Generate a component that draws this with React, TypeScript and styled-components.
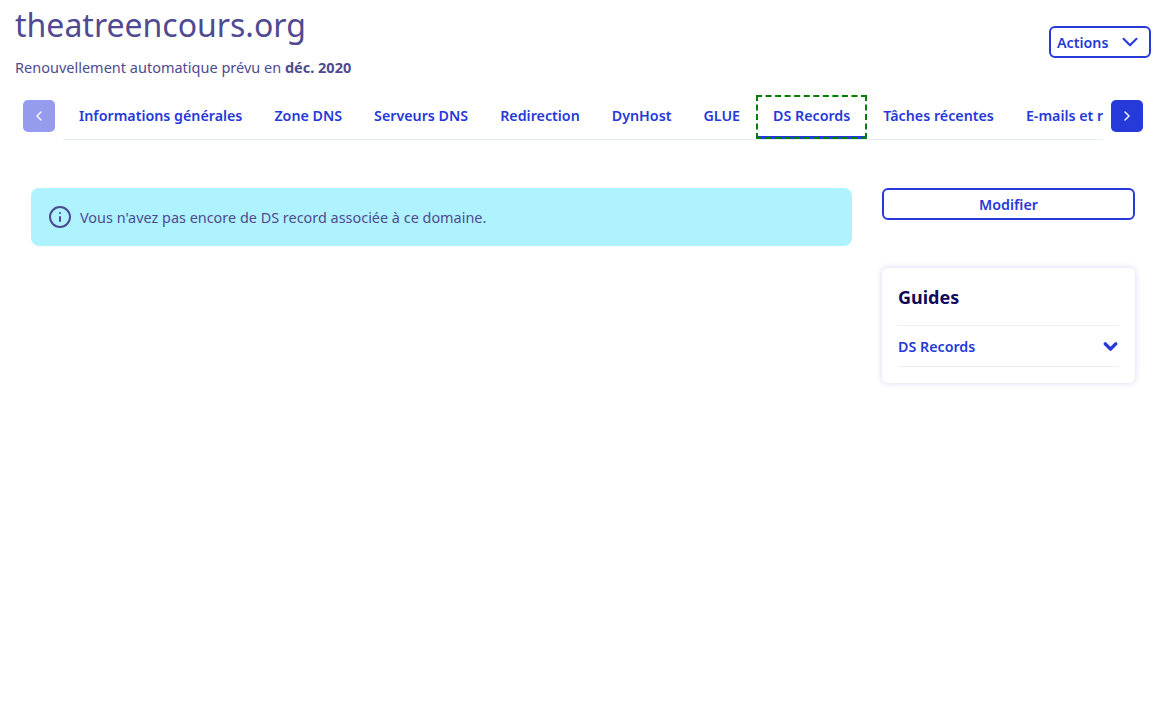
import { ChevronDown, ChevronLeft, ChevronRight, Info } from 'lucide-react';
import styled, { createGlobalStyle } from 'styled-components';

const GlobalStyle = createGlobalStyle`
  html, body {
    margin: 0;
    background: #fff;
    font-family: "Noto Sans", "Lato", sans-serif;
    color: #4d4a8f;
  }
`;

const Page = styled.div`
  min-height: 709px;
  box-sizing: border-box;
  overflow: hidden;
`;

const Header = styled.header`
  display: flex;
  justify-content: space-between;
  align-items: flex-start;
  padding: 0 6px 0 15px;
  height: 95px;
`;

const Title = styled.h1`
  margin: 5px 0 0;
  font-size: 32px;
  line-height: 40px;
  font-weight: 400;
  color: #4f4a91;
`;

const Renewal = styled.p`
  margin: 12px 0 0;
  font-size: 14.5px;
  line-height: 20px;
  color: #4f4a91;
  b { font-weight: 700; }
`;

const ActionsButton = styled.button`
  margin-top: 26px;
  width: 102px;
  height: 32px;
  box-sizing: border-box;
  display: flex;
  align-items: center;
  justify-content: space-between;
  padding: 0 6px 0 6px;
  background: #fff;
  border: 2px solid #2639d9;
  border-radius: 6px;
  color: #2639d9;
  font: 600 14.25px "Noto Sans", sans-serif;
`;

const TabBar = styled.nav`
  display: flex;
  align-items: flex-start;
  gap: 8px;
  padding: 0 14px 0 23px;
  height: 45px;
`;

const ScrollButton = styled.button<{ $disabled?: boolean }>`
  flex: none;
  margin-top: 5px;
  width: 32px;
  height: 32px;
  padding: 0;
  border: none;
  border-radius: 5px;
  display: flex;
  align-items: center;
  justify-content: center;
  color: #fff;
  background: ${p => (p.$disabled ? '#959cee' : '#2639d9')};
`;

const TabStrip = styled.div`
  flex: 1;
  min-width: 0;
  height: 45px;
  box-sizing: border-box;
  display: flex;
  overflow: hidden;
  border-bottom: 1px solid #e6eef5;
`;

const Tab = styled.a<{ $active?: boolean }>`
  flex: none;
  box-sizing: border-box;
  height: 44px;
  padding: 0 ${p => (p.$active ? 17 : 16)}px 4px;
  display: flex;
  align-items: center;
  white-space: nowrap;
  font-size: 14.25px;
  font-weight: 600;
  color: #2639d9;
  ${p => p.$active && `
    box-shadow: inset 0 -3px 0 #2639d9;
    outline: 2px dashed #008000;
    outline-offset: -2px;
  `}
`;

const Content = styled.main`
  display: flex;
  align-items: flex-start;
  gap: 30px;
  padding: 48px 22px 0 31px;
`;

const Alert = styled.div`
  flex: none;
  width: 821px;
  height: 58px;
  box-sizing: border-box;
  display: flex;
  align-items: center;
  gap: 8px;
  padding: 0 17px;
  border-radius: 8px;
  background: #aef3ff;
  font-size: 14.43px;
  color: #4f4a91;
`;

const Sidebar = styled.aside`
  flex: 1;
  display: flex;
  flex-direction: column;
  gap: 48px;
`;

const EditButton = styled.button`
  height: 32px;
  background: #fff;
  border: 2px solid #2639d9;
  border-radius: 6px;
  color: #2639d9;
  font: 600 14.25px "Noto Sans", sans-serif;
`;

const GuideCard = styled.section`
  height: 115px;
  box-sizing: border-box;
  padding: 16px;
  border-radius: 6px;
  box-shadow: 0 0 6px rgba(70, 70, 200, 0.22);
`;

const GuideTitle = styled.h2`
  margin: 0;
  height: 41px;
  font-size: 18px;
  line-height: 26px;
  font-weight: 700;
  color: #100a5c;
  border-bottom: 1px solid #eeeff6;
`;

const GuideRow = styled.div`
  height: 41px;
  box-sizing: border-box;
  display: flex;
  align-items: center;
  justify-content: space-between;
  font-size: 14.25px;
  font-weight: 600;
  color: #2639d9;
  border-bottom: 1px solid #eeeff6;
  svg { margin-right: -2px; }
`;

const tabs = ['Informations générales', 'Zone DNS', 'Serveurs DNS', 'Redirection', 'DynHost', 'GLUE', 'DS Records', 'Tâches récentes', 'E-mails et redirections'];

export default function App() {
  return (
    <Page>
      <GlobalStyle />
      <Header>
        <div>
          <Title>theatreencours.org</Title>
          <Renewal>Renouvellement automatique prévu en <b>déc. 2020</b></Renewal>
        </div>
        <ActionsButton>
          Actions
          <ChevronDown size={26} strokeWidth={1.9} />
        </ActionsButton>
      </Header>
      <TabBar>
        <ScrollButton $disabled><ChevronLeft size={16} strokeWidth={2} /></ScrollButton>
        <TabStrip>
          {tabs.map(t => (
            <Tab key={t} $active={t === 'DS Records'}>{t}</Tab>
          ))}
        </TabStrip>
        <ScrollButton><ChevronRight size={16} strokeWidth={2} /></ScrollButton>
      </TabBar>
      <Content>
        <Alert>
          <Info size={24} strokeWidth={2} />
          Vous n'avez pas encore de DS record associée à ce domaine.
        </Alert>
        <Sidebar>
          <EditButton>Modifier</EditButton>
          <GuideCard>
            <GuideTitle>Guides</GuideTitle>
            <GuideRow>
              DS Records
              <ChevronDown size={21} strokeWidth={4} />
            </GuideRow>
          </GuideCard>
        </Sidebar>
      </Content>
    </Page>
  );
}
